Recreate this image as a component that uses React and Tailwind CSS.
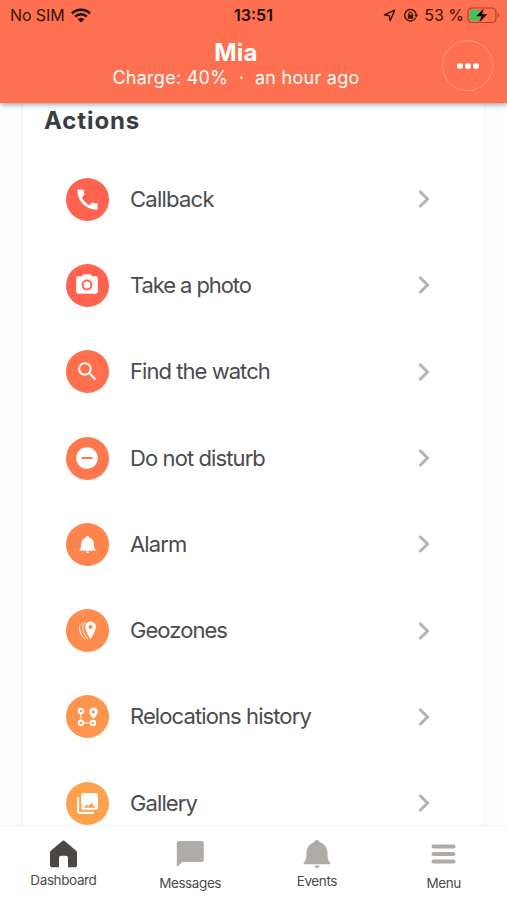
import React from 'react';
import { MdCall, MdPhotoCamera, MdSearch, MdRemoveCircle } from 'react-icons/md';

const BellIcon = ({ className }) => (
  <svg viewBox="0 0 28 28" fill="currentColor" className={className}>
    <path d="M14 0c1.500 0 2.600 1 2.800 2.300C21 3.500 24.300 7.400 24.500 12.500c.1 4.500.3 7 1.400 8.500.6.700 1.400 1.200 1.400 2.200 0 .6-.4 1-1 1H1.700c-.6 0-1-.4-1-1 0-1 .8-1.500 1.400-2.200 1.100-1.500 1.300-4 1.400-8.500C3.700 7.400 7 3.500 11.200 2.300 11.400 1 12.500 0 14 0z" />
    <path d="M11.500 25.500h5a2.500 2.500 0 0 1-5 0z" />
  </svg>
);

const GeozonesIcon = ({ className }) => (
  <svg viewBox="0 0 17 19" className={className}>
    <path
      fill="currentColor"
      fillRule="evenodd"
      d="M11.500.5C8.600.5 6.200 2.800 6.200 6c0 4.500 5.300 12.300 5.300 12.300S16.800 10.500 16.800 6c0-3.200-2.400-5.500-5.300-5.500zm0 3.400a2 2 0 1 1 0 4 2 2 0 0 1 0-4z"
    />
    <path
      fill="none"
      stroke="currentColor"
      strokeWidth=".9"
      strokeLinecap="round"
      d="M6 1.800C4.300 3 3.800 4.500 3.800 6.500c0 4 2 8.300 4.700 11.300M3.300 2C1.400 3.400.6 5 .6 7c0 3.900 2.100 8 4.900 10.900"
    />
  </svg>
);

const RelocationsIcon = ({ className }) => (
  <svg viewBox="0 0 21 20" fill="none" stroke="currentColor" className={className}>
    <g strokeWidth="2">
      <circle cx="4" cy="4" r="2.200" />
      <circle cx="4" cy="16" r="2.200" />
      <circle cx="16" cy="16" r="2.200" />
    </g>
    <path strokeWidth="1.400" strokeDasharray="1.800 .7" d="M4 7v6M7 16h6" />
    <path
      fill="currentColor"
      stroke="none"
      fillRule="evenodd"
      d="M16.500.5c-2.500 0-4.300 1.900-4.300 4.300 0 2.900 4.300 7.200 4.300 7.200s4.300-4.300 4.300-7.200c0-2.400-1.800-4.300-4.300-4.300zm0 2.800a1.600 1.600 0 1 1 0 3.200 1.600 1.600 0 0 1 0-3.200z"
    />
  </svg>
);

const GalleryIcon = ({ className }) => (
  <svg viewBox="0 0 24 24" fill="currentColor" className={className}>
    <path
      fillRule="evenodd"
      d="M22 16V4c0-1.100-.9-2-2-2H8c-1.100 0-2 .9-2 2v12c0 1.100.9 2 2 2h12c1.100 0 2-.9 2-2zM8.500 16l2.700-3.200 1.700 1.800 2.800-3.400L19.500 16h-11z"
    />
    <path d="M2 6v14c0 1.100.9 2 2 2h14v-2H4V6H2z" />
  </svg>
);

const HomeIcon = ({ className }) => (
  <svg viewBox="0 0 28 28" fill="currentColor" className={className}>
    <path d="M13 1.200a2.300 2.300 0 0 1 3 0l10.900 9.200c.7.600 1.100 1.400 1.100 2.300v12.500c0 1.200-.9 2.100-2.100 2.100H19v-9c0-1.700-.8-2.500-2.400-2.500h-4.200c-1.600 0-2.400.8-2.400 2.500v9H3.100c-1.200 0-2.100-.9-2.100-2.100V12.700c0-.9.400-1.700 1.100-2.300z" />
  </svg>
);

const MessageIcon = ({ className }) => (
  <svg viewBox="0 0 28 28" fill="currentColor" className={className}>
    <path d="M3.300 1h22.300c1.300 0 2.200.9 2.200 2.200v16.600c0 1.300-.9 2.200-2.200 2.200H6.300l-5.500 5V3.200C.8 1.900 2 1 3.300 1z" />
  </svg>
);

const MenuIcon = ({ className }) => (
  <svg viewBox="0 0 28 28" fill="none" stroke="currentColor" strokeWidth="4" strokeLinecap="round" className={className}>
    <path d="M3.500 6.500h20M3.500 14h20M3.500 21.500h20" />
  </svg>
);

const WifiIcon = () => (
  <svg viewBox="0 0 20 15" className="ml-[6px] h-[15px] w-5">
    <g fill="none" stroke="#1a0b08" strokeWidth="2.500">
      <path d="M1 5.300a12.900 12.900 0 0 1 18 0" />
      <path d="M4.200 8.700a8.300 8.300 0 0 1 11.600 0" />
    </g>
    <path fill="#1a0b08" d="M10 14.500l-3.300-3.200a4.700 4.700 0 0 1 6.600 0z" />
  </svg>
);

const LocationIcon = () => (
  <svg viewBox="0 0 14 14" className="size-[13px]">
    <path d="M12.500 1.300L1.500 6.300l5.300 1 1 5.300z" fill="none" stroke="#351610" strokeWidth="1.500" strokeLinejoin="round" />
  </svg>
);

const RotationLockIcon = () => (
  <svg viewBox="0 0 16 16" className="ml-[7px] size-[15px]" fill="none" stroke="#351610" strokeWidth="1.500">
    <path d="M13.600 10.400A6.200 6.200 0 1 1 14.200 8" />
    <path d="M12 7.300h4.200L14.200 10z" fill="#351610" stroke="none" />
    <rect x="5.200" y="7.200" width="5.600" height="4.200" rx=".6" fill="#351610" stroke="none" />
    <path d="M6.300 7.500V6a1.700 1.700 0 0 1 3.400 0v1.500" strokeWidth="1.200" />
  </svg>
);

const BatteryIcon = () => (
  <svg viewBox="0 0 33 17" className="ml-[3px] h-[17px] w-[33px]">
    <rect x="1" y="1" width="28" height="14.500" rx="4" fill="none" stroke="#a5432f" strokeWidth="1.200" />
    <path d="M30.700 6v4.600c1-.4 1.600-1.200 1.600-2.300S31.700 6.400 30.700 6z" fill="#a5432f" />
    <path d="M5 3h8v10.500H5a2 2 0 0 1-2-2V5a2 2 0 0 1 2-2z" fill="#34c759" />
    <path d="M17.300.5L8.600 9.500h5.300l-2 6.600L20.800 6.900h-5.300z" fill="#0d0504" stroke="#ff7050" strokeWidth=".6" />
  </svg>
);

const actions = [
  { label: 'Callback', icon: MdCall, iconClass: 'size-[27px]', color: 'bg-[#ff624f]', spacing: 'tracking-[-0.75px]' },
  { label: 'Take a photo', icon: MdPhotoCamera, iconClass: 'size-[26px]', color: 'bg-[#ff634e]', spacing: 'tracking-[-1.1px]' },
  { label: 'Find the watch', icon: MdSearch, iconClass: 'size-[25px]', color: 'bg-[#ff6e4d]', spacing: 'tracking-[-0.95px]' },
  { label: 'Do not disturb', icon: MdRemoveCircle, iconClass: 'size-[26px]', color: 'bg-[#ff784d]', spacing: 'tracking-[-0.9px]' },
  { label: 'Alarm', icon: BellIcon, iconClass: 'w-[17px] h-[19px]', color: 'bg-[#ff834d]', spacing: 'tracking-[-0.9px]' },
  { label: 'Geozones', icon: GeozonesIcon, iconClass: 'w-[17px] h-[19px]', color: 'bg-[#ff8b4c]', spacing: 'tracking-[-0.95px]' },
  { label: 'Relocations history', icon: RelocationsIcon, iconClass: 'w-[21px] h-5', color: 'bg-[#ff954c]', spacing: 'tracking-[-0.9px]' },
  { label: 'Gallery', icon: GalleryIcon, iconClass: 'size-[25px]', color: 'bg-[#ffa04c]', spacing: 'tracking-[-0.9px]' },
];

const tabs = [
  { label: 'Dashboard', icon: HomeIcon, color: 'text-[#4a4744]', labelClass: 'mt-[-1px]' },
  { label: 'Messages', icon: MessageIcon, color: 'text-[#afaca8]', labelClass: 'mt-[2px]' },
  { label: 'Events', icon: BellIcon, color: 'text-[#afaca8]', labelClass: '' },
  { label: 'Menu', icon: MenuIcon, color: 'text-[#afaca8]', labelClass: 'mt-[2px]' },
];

const StatusBar = () => (
  <div className="grid h-[30px] grid-cols-[1fr_auto_1fr] items-center text-[16px] text-[#351610]">
    <div className="flex items-center pl-[10px]">
      <span className="tracking-[-0.1px]">No SIM</span>
      <WifiIcon />
    </div>
    <span className="font-semibold text-[#1a0b08]">13:51</span>
    <div className="flex items-center justify-end pr-[7px]">
      <LocationIcon />
      <RotationLockIcon />
      <span className="ml-[6px]">53 %</span>
      <BatteryIcon />
    </div>
  </div>
);

const Header = () => (
  <header className="relative z-10 h-[103px] shrink-0 bg-[#ff7050] shadow-[0_1px_6px_rgba(0,0,0,0.45)]">
    <StatusBar />
    <div className="grid grid-cols-[60px_1fr_65px] text-white">
      <div />
      <div className="pr-[30px] text-center">
        <h1 className="pt-[9px] text-[24px] leading-[28px] font-bold tracking-[0.3px]">Mia</h1>
        <p className="text-[18px] leading-[21px] tracking-[0.27px] whitespace-pre">Charge: 40%  ·  an hour ago</p>
      </div>
      <button className="mt-[10px] flex size-[51px] items-center justify-center gap-[2px] justify-self-start rounded-full border border-[#ff9a83]">
        <span className="size-[6px] rounded-full bg-white" />
        <span className="size-[6px] rounded-full bg-white" />
        <span className="size-[6px] rounded-full bg-white" />
      </button>
    </div>
  </header>
);

const ActionRow = ({ label, icon: Icon, iconClass, color, spacing }) => (
  <li className="flex h-[86.3px] items-center pr-[54px] pl-[42.5px]">
    <span className={`flex size-[43px] items-center justify-center rounded-full text-white ${color}`}>
      <Icon className={iconClass} />
    </span>
    <span className={`ml-[21.500px] flex-1 text-[22px] text-[#4b4b4d] ${spacing}`}>{label}</span>
    <svg viewBox="0 0 12 20" className="h-5 w-3" fill="none" stroke="#b3b3b3" strokeWidth="3">
      <path d="M1.500 2L9.500 10l-8 8" />
    </svg>
  </li>
);

const TabBar = () => (
  <nav className="grid h-[75px] shrink-0 grid-cols-4 border-t border-[#f3f3f3] bg-white">
    {tabs.map(({ label, icon: Icon, color, labelClass }) => (
      <div key={label} className="flex flex-col items-center pt-[14px]">
        <Icon className={`size-7 ${color}`} />
        <span className={`text-[13.5px] leading-[26px] tracking-[-0.4px] text-[#4b4b4b] ${labelClass}`}>{label}</span>
      </div>
    ))}
  </nav>
);

export default function App() {
  return (
    <div className="flex h-[900px] w-[507px] flex-col overflow-hidden bg-white font-['Inter',sans-serif]">
      <Header />
      <main className="min-h-0 flex-1 overflow-hidden bg-[#fefefe] px-[21px]">
        <section className="h-full border-x-2 border-[#f9f9f9] bg-white">
          <h2 className="h-[53px] pl-[21px] text-[24px] leading-[35px] font-bold tracking-[0.9px] text-[#393d43]">
            Actions
          </h2>
          <ul>
            {actions.map((action) => (
              <ActionRow key={action.label} {...action} />
            ))}
          </ul>
        </section>
      </main>
      <TabBar />
    </div>
  );
}
